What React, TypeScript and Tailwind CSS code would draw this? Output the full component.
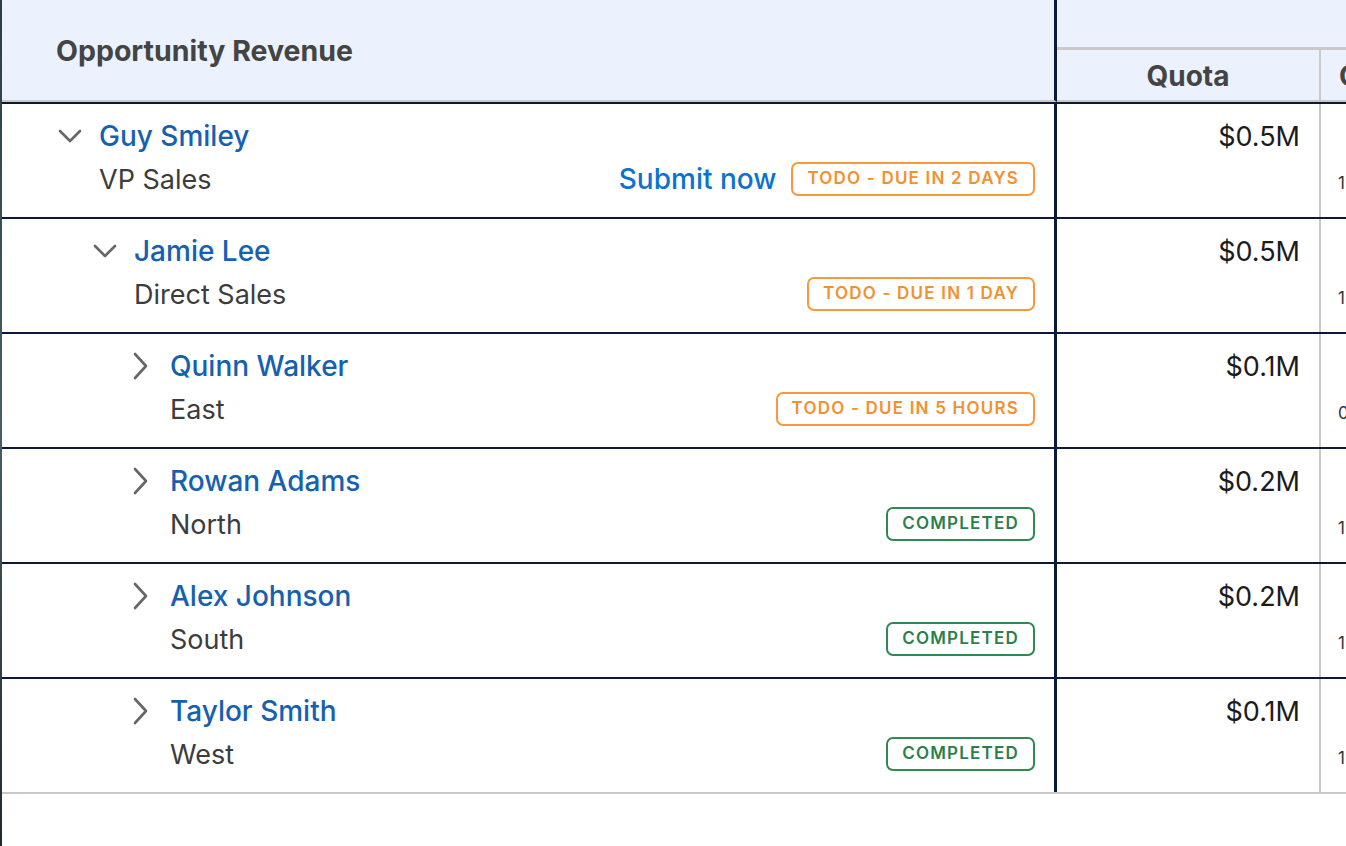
import { ReactNode } from "react";

type Row = {
  name: string;
  title: string;
  level: number;
  open: boolean;
  quota: string;
  extra: string;
  status: "todo" | "done";
  label: string;
  submit?: boolean;
};

const rows: Row[] = [
  { name: "Guy Smiley", title: "VP Sales", level: 0, open: true, quota: "$0.5M", extra: "1", status: "todo", label: "TODO - DUE IN 2 DAYS", submit: true },
  { name: "Jamie Lee", title: "Direct Sales", level: 1, open: true, quota: "$0.5M", extra: "1", status: "todo", label: "TODO - DUE IN 1 DAY" },
  { name: "Quinn Walker", title: "East", level: 2, open: false, quota: "$0.1M", extra: "0", status: "todo", label: "TODO - DUE IN 5 HOURS" },
  { name: "Rowan Adams", title: "North", level: 2, open: false, quota: "$0.2M", extra: "1", status: "done", label: "COMPLETED" },
  { name: "Alex Johnson", title: "South", level: 2, open: false, quota: "$0.2M", extra: "1", status: "done", label: "COMPLETED" },
  { name: "Taylor Smith", title: "West", level: 2, open: false, quota: "$0.1M", extra: "1", status: "done", label: "COMPLETED" },
];

const indent = ["pl-[54px]", "pl-[89px]", "pl-[125px]"];
const subIndent = ["pl-[97px]", "pl-[132px]", "pl-[168px]"];

function Chevron({ open }: { open: boolean }) {
  if (open) {
    return (
      <svg width="28" height="20" viewBox="0 0 28 20" className="text-[#666]">
        <path d="M4 5 L14 15 L24 5" fill="none" stroke="currentColor" strokeWidth="2.6" strokeLinecap="round" strokeLinejoin="round" />
      </svg>
    );
  }
  return (
    <svg width="28" height="30" viewBox="0 0 28 30" className="text-[#666]">
      <path d="M8 3 L19 15 L8 27" fill="none" stroke="currentColor" strokeWidth="2.6" strokeLinecap="round" strokeLinejoin="round" />
    </svg>
  );
}

function Badge({ status, children }: { status: "todo" | "done"; children: ReactNode }) {
  const tone =
    status === "todo"
      ? "border-[#f7993c] text-[#f4902e]"
      : "border-[#2f8a52] text-[#2b7f4b]";
  return (
    <span
      className={`h-[34px] px-[14px] flex items-center rounded-[7px] border-2 text-[17px] font-semibold tracking-[1.2px] ${tone}`}
    >
      {children}
    </span>
  );
}

export default function App() {
  return (
    <div className="flex w-[1346px] h-[846px] overflow-hidden bg-white font-['Inter',sans-serif]">
      {/* window edge */}
      <div className="w-[2px] shrink-0 bg-gradient-to-b from-[#2c3d44] via-[#4b5e66] to-[#1e2a30]"></div>

      <div className="flex-1 flex flex-col">
        {/* header */}
        <div className="flex h-[102px] shrink-0 bg-[#ebf2fe]">
          <div className="w-[1055px] shrink-0 flex items-center pl-[54px] border-b-2 border-b-[#c9c9c9] border-r-[3px] border-r-[#0b1a38]">
            <span className="text-[28.5px] font-bold text-[#444] pt-[2px]">Opportunity Revenue</span>
          </div>
          <div className="flex-1 flex flex-col">
            <div className="h-[50px] shrink-0 border-b-[3px] border-[#c9c9c9]"></div>
            <div className="flex-1 flex border-b-2 border-[#c9c9c9]">
              <div className="w-[264px] shrink-0 flex items-center justify-center border-r-2 border-[#c9c9c9]">
                <span className="text-[28px] font-bold text-[#444] pt-[2px]">Quota</span>
              </div>
              <div className="flex-1 flex items-center pl-[18px]">
                <span className="text-[28px] font-bold text-[#444] pt-[2px]">Close</span>
              </div>
            </div>
          </div>
        </div>

        {/* rows */}
        {rows.map((r, i) => (
          <div
            key={r.name}
            className={`flex h-[115px] shrink-0 border-t-2 border-t-[#0b1a38] ${
              i === rows.length - 1 ? "h-[117px] border-b-2 border-b-[#c9c9c9]" : ""
            }`}
          >
            <div className="w-[1055px] shrink-0 flex flex-col pt-[15px] pr-[19px] border-r-[3px] border-r-[#0b1a38]">
              <div className={`flex items-center h-[34px] ${indent[r.level]}`}>
                <span className="w-[43px] flex items-center">
                  <Chevron open={r.open} />
                </span>
                <span className="text-[28px] font-medium text-[#1561b0]">{r.name}</span>
              </div>
              <div className={`flex items-center justify-between mt-[9px] h-[34px] ${subIndent[r.level]}`}>
                <span className="text-[27px] text-[#3c3c3c] pt-[2px]">{r.title}</span>
                <div className="flex items-center gap-[15px]">
                  {r.submit && (
                    <span className="text-[28px] font-medium text-[#0c72d1]">Submit now</span>
                  )}
                  <Badge status={r.status}>{r.label}</Badge>
                </div>
              </div>
            </div>
            <div className="w-[264px] shrink-0 flex justify-end pt-[16px] pr-[19px] border-r-2 border-[#c9c9c9]">
              <span className="h-[34px] flex items-center text-[27px] text-[#1c1c1c]">{r.quota}</span>
            </div>
            <div className="flex-1 pl-[17px] pt-[67px]">
              <span className="text-[17px] text-[#333]">{r.extra}</span>
            </div>
          </div>
        ))}
      </div>
    </div>
  );
}
